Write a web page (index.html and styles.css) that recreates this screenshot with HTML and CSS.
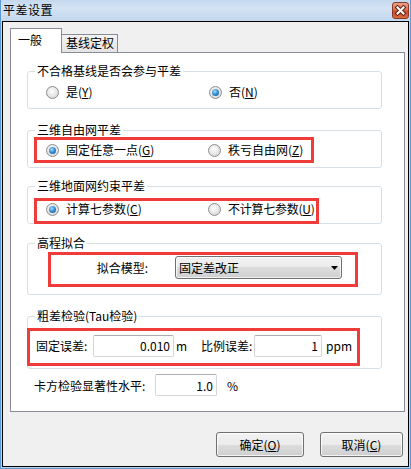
FILE: index.html
```html
<!DOCTYPE html>
<html lang="zh-CN">
<head>
<meta charset="utf-8">
<title>平差设置</title>
<link rel="stylesheet" href="styles.css">
</head>
<body>
<div class="window">
  <div class="titlebar">
    <span class="title">平差设置</span>
    <span class="close">
      <svg width="17" height="17" viewBox="0 0 17 17">
        <path d="M5.5 5.5 L11.5 11.5 M11.5 5.5 L5.5 11.5" stroke="#5a2418" stroke-width="4" stroke-linecap="square" fill="none"/>
        <path d="M5.5 5.5 L11.5 11.5 M11.5 5.5 L5.5 11.5" stroke="#ffffff" stroke-width="2" stroke-linecap="square" fill="none"/>
      </svg>
    </span>
  </div>
  <div class="client">
    <div class="tabs">
      <div class="tab active">一般</div>
      <div class="tab">基线定权</div>
    </div>
    <div class="panel">
      <fieldset class="group g1">
        <legend>不合格基线是否会参与平差</legend>
        <div class="radios pad1">
          <label class="opt"><span class="radio"></span>是(<u>Y</u>)</label>
          <label class="opt"><span class="radio on"></span>否(<u>N</u>)</label>
        </div>
      </fieldset>
      <fieldset class="group g2">
        <legend>三维自由网平差</legend>
        <div class="hl radios hl2">
          <label class="opt"><span class="radio on"></span>固定任意一点(<u>G</u>)</label>
          <label class="opt"><span class="radio"></span>秩亏自由网(<u>Z</u>)</label>
        </div>
      </fieldset>
      <fieldset class="group g3">
        <legend>三维地面网约束平差</legend>
        <div class="hl radios hl3">
          <label class="opt"><span class="radio on"></span>计算七参数(<u>C</u>)</label>
          <label class="opt"><span class="radio"></span>不计算七参数(<u>U</u>)</label>
        </div>
      </fieldset>
      <fieldset class="group g4">
        <legend>高程拟合</legend>
        <div class="hl hl4">
          <span class="fit-label">拟合模型:</span>
          <div class="combo">
            <span>固定差改正</span>
            <svg class="arrow" width="7" height="4" viewBox="0 0 7 4"><path d="M0 0 H7 L3.5 4 Z" fill="#000"/></svg>
          </div>
        </div>
      </fieldset>
      <fieldset class="group g5">
        <legend>粗差检验(Tau检验)</legend>
        <div class="hl hl5">
          <span class="lbl-fixed">固定误差:</span>
          <input class="field f-fixed" type="text" value="0.010">
          <span class="unit-m">m</span>
          <span class="lbl-ratio">比例误差:</span>
          <input class="field f-ratio" type="text" value="1">
          <span class="unit-ppm">ppm</span>
        </div>
      </fieldset>
      <div class="chi">
        <span class="lbl-chi">卡方检验显著性水平:</span>
        <input class="field f-chi" type="text" value="1.0">
        <span class="unit-pct">%</span>
      </div>
    </div>
    <div class="buttons">
      <button class="btn btn-ok">确定(<u>O</u>)</button>
      <button class="btn btn-cancel">取消(<u>C</u>)</button>
    </div>
  </div>
</div>
</body>
</html>
```

FILE: styles.css
```css
* { box-sizing: border-box; }
html, body { margin: 0; padding: 0; }
body {
  font-family: "Noto Sans CJK SC", "Noto Sans", sans-serif;
  font-size: 12px;
  color: #000;
  background: #ffffff;
  white-space: nowrap;
}
.window {
  width: 411px;
  height: 469px;
  display: flex;
  flex-direction: column;
  border: 1px solid #5c9ad6;
  border-top: 0;
  padding: 0 1px 1px 1px;
  background: linear-gradient(to bottom, #c4d9ef 0px, #d4e3f4 8px, #c3d8ee 20px, #bcd4ee 100%);
}
.titlebar {
  height: 21px;
  display: flex;
  justify-content: space-between;
  align-items: flex-start;
  padding-left: 1px;
}
.title {
  line-height: 20px;
  font-size: 12px;
  letter-spacing: 0.5px;
}
.close {
  margin-top: 2px;
  width: 17px;
  height: 17px;
  border: 1px solid #8a3a2a;
  border-radius: 3px;
  background: linear-gradient(to bottom, #eaa08a 0%, #de7152 45%, #cc4a28 55%, #da6a40 100%);
  display: flex;
  align-items: center;
  justify-content: center;
}
.close svg { display: block; margin: -1px; }

.client {
  flex: 1;
  border: 1px solid #000;
  background: #f0f0f0;
  padding: 6px 3px 8px 7px;
  display: flex;
  flex-direction: column;
}
.tabs {
  height: 24px;
  display: flex;
  align-items: flex-end;
  position: relative;
  z-index: 1;
}
.tab {
  width: 56px;
  height: 18px;
  border: 1px solid #898c95;
  border-left: 0;
  border-bottom: 0;
  background: linear-gradient(to bottom, #f3f3f3, #e4e4e4);
  padding-left: 4px;
  line-height: 16px;
}
.tab.active {
  width: 52px;
  height: 25px;
  margin-bottom: -1px;
  border-left: 1px solid #898c95;
  background: #ffffff;
  padding: 3px 0 0 7px;
}
.panel {
  height: 360px;
  background: #ffffff;
  border: 1px solid #898c95;
  padding: 11px 22px 0 16px;
}
.group {
  margin: 0;
  padding: 0;
  border: 1px solid #d5dfe5;
  border-radius: 3px;
  min-width: 0;
}
.group legend {
  margin-left: 7px;
  padding: 0 2px;
  line-height: 14px;
}
.radios {
  display: grid;
  grid-template-columns: 163px max-content;
  line-height: 16px;
}
.opt {
  display: flex;
  align-items: center;
  white-space: nowrap;
}
.radio {
  flex: none;
  width: 13px;
  height: 13px;
  margin-right: 7px;
  border-radius: 50%;
  border: 1px solid #8e8f8f;
  background: radial-gradient(circle at 45% 40%, #ffffff 0, #e9e9e9 45%, #cdcdcd 100%);
  display: inline-grid;
  place-items: center;
}
.radio.on::before {
  content: "";
  width: 7px;
  height: 7px;
  border-radius: 50%;
  background: radial-gradient(circle at 40% 35%, #a6dcff 0, #3c93d6 45%, #0c4a86 100%);
}
.hl { border: 3px solid #f03b3b; }

.pad1 { padding: 6px 0 8px 18px; }

.g2 { margin-top: 14px; padding-bottom: 4px; }
.hl2 { margin-left: 6px; width: 280px; padding: 2px 0 2px 9px; grid-template-columns: 162px max-content; }

.g3 { margin-top: 11px; padding-bottom: 0; }
.hl3 { margin: 5px 0 -1px 6px; width: 285px; padding: 0 0 4px 9px; grid-template-columns: 162px max-content; }
.hl3 .opt + .opt { letter-spacing: -0.25px; }

.g4 { margin-top: 12px; padding-bottom: 7px; }
.hl4 {
  margin: 2px 0 0 20px;
  width: 310px;
  height: 35px;
  padding: 1px 0 5px 0;
  display: flex;
  align-items: center;
}
.fit-label {
  width: 97px;
  text-align: right;
  margin-right: 27px;
}
.combo {
  width: 167px;
  height: 23px;
  border: 1px solid #707070;
  border-radius: 3px;
  background: linear-gradient(to bottom, #f2f2f2 0%, #ebebeb 50%, #dddddd 50%, #cfcfcf 100%);
  box-shadow: inset 0 0 0 1px rgba(255,255,255,0.7);
  display: flex;
  align-items: center;
  justify-content: space-between;
  padding: 0 3px 0 3px;
}
.arrow { display: block; }

.g5 { margin-top: 14px; padding-bottom: 2px; }
.hl5 {
  margin: 5px 0 0 -1px;
  width: 333px;
  height: 38px;
  padding: 0 0 3px 6px;
  display: flex;
  align-items: center;
}
.field {
  height: 22px;
  border: 1px solid #d3d6db;
  border-top-color: #abadb3;
  border-radius: 2px;
  background: #ffffff;
  text-align: right;
  padding: 0 3px 0 0;
  margin: 0;
  font: inherit;
  color: #000;
  outline: none;
}
.lbl-fixed { width: 57px; }
.f-fixed { width: 81px; }
.unit-m { width: 27px; padding-left: 2px; }
.lbl-ratio { width: 53px; }
.f-ratio { width: 68px; }
.unit-ppm { margin-left: 4px; }

.chi {
  margin-top: 5px;
  padding-left: 7px;
  display: flex;
  align-items: center;
}
.lbl-chi { width: 121px; }
.f-chi { width: 62px; }
.unit-pct { margin-left: 10px; }

.buttons {
  margin-top: 20px;
  display: flex;
  justify-content: flex-end;
  gap: 16px;
  padding-right: 2px;
}
.btn {
  height: 25px;
  border: 1px solid #707070;
  border-radius: 3px;
  background: linear-gradient(to bottom, #f2f2f2 0%, #ebebeb 50%, #dddddd 50%, #cfcfcf 100%);
  box-shadow: inset 0 0 0 1px rgba(255,255,255,0.75);
  font: inherit;
  color: #000;
  padding: 0;
  margin: 0;
}
.btn-ok { width: 88px; }
.btn-cancel { width: 83px; }
```
